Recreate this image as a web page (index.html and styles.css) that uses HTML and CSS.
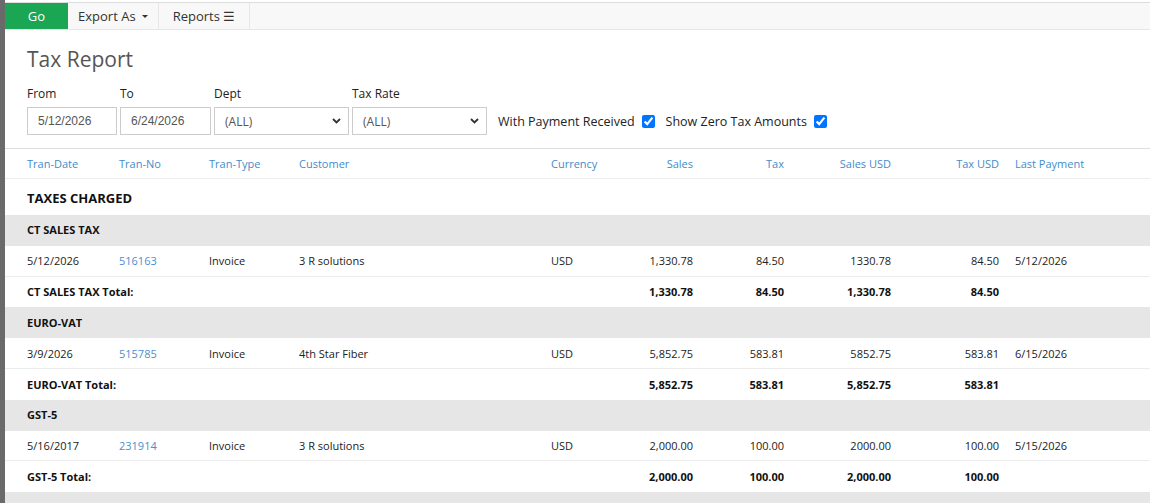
FILE: index.html
```html
<!DOCTYPE html>
<html>
<head>
<meta charset="utf-8">
<link rel="stylesheet" href="styles.css">
</head>
<body>
<div class="app">
  <div class="rail"></div>
  <div class="main">
    <div class="toolbar">
      <button class="tb-go">Go</button>
      <button class="tb-item">Export As <span class="caret"></span></button>
      <button class="tb-item">Reports ☰</button>
    </div>

    <div class="filters">
      <h1 class="title">Tax Report</h1>
      <div class="filter-row">
        <div class="field">
          <label class="flabel">From</label>
          <input class="date" type="text" value="5/12/2026">
        </div>
        <div class="field">
          <label class="flabel">To</label>
          <input class="date wide" type="text" value="6/24/2026">
        </div>
        <div class="field">
          <label class="flabel">Dept</label>
          <select class="sel"><option>(ALL)</option></select>
        </div>
        <div class="field">
          <label class="flabel">Tax Rate</label>
          <select class="sel"><option>(ALL)</option></select>
        </div>
        <label class="check first">With Payment Received <input type="checkbox" checked></label>
        <label class="check">Show Zero Tax Amounts <input type="checkbox" checked></label>
      </div>
    </div>

    <div class="report">
      <div class="row head">
        <div class="c">Tran-Date</div><div class="c">Tran-No</div><div class="c">Tran-Type</div><div class="c">Customer</div><div class="c">Currency</div>
        <div class="c r">Sales</div><div class="c r">Tax</div><div class="c r">Sales USD</div><div class="c r">Tax USD</div><div class="c">Last Payment</div>
      </div>
      <div class="row section"><div class="c span">TAXES CHARGED</div></div>

      <div class="row group"><div class="c span">CT SALES TAX</div></div>
      <div class="row data">
        <div class="c">5/12/2026</div><div class="c"><a class="link">516163</a></div><div class="c">Invoice</div><div class="c">3 R solutions</div><div class="c">USD</div>
        <div class="c r">1,330.78</div><div class="c r">84.50</div><div class="c r">1330.78</div><div class="c r">84.50</div><div class="c">5/12/2026</div>
      </div>
      <div class="row total">
        <div class="c span4">CT SALES TAX Total:</div><div class="c"></div>
        <div class="c r">1,330.78</div><div class="c r">84.50</div><div class="c r">1,330.78</div><div class="c r">84.50</div><div class="c"></div>
      </div>

      <div class="row group"><div class="c span">EURO-VAT</div></div>
      <div class="row data">
        <div class="c">3/9/2026</div><div class="c"><a class="link">515785</a></div><div class="c">Invoice</div><div class="c">4th Star Fiber</div><div class="c">USD</div>
        <div class="c r">5,852.75</div><div class="c r">583.81</div><div class="c r">5852.75</div><div class="c r">583.81</div><div class="c">6/15/2026</div>
      </div>
      <div class="row total">
        <div class="c span4">EURO-VAT Total:</div><div class="c"></div>
        <div class="c r">5,852.75</div><div class="c r">583.81</div><div class="c r">5,852.75</div><div class="c r">583.81</div><div class="c"></div>
      </div>

      <div class="row group"><div class="c span">GST-5</div></div>
      <div class="row data">
        <div class="c">5/16/2017</div><div class="c"><a class="link">231914</a></div><div class="c">Invoice</div><div class="c">3 R solutions</div><div class="c">USD</div>
        <div class="c r">2,000.00</div><div class="c r">100.00</div><div class="c r">2000.00</div><div class="c r">100.00</div><div class="c">5/15/2026</div>
      </div>
      <div class="row total">
        <div class="c span4">GST-5 Total:</div><div class="c"></div>
        <div class="c r">2,000.00</div><div class="c r">100.00</div><div class="c r">2,000.00</div><div class="c r">100.00</div><div class="c"></div>
      </div>

      <div class="row group"><div class="c span">&nbsp;</div></div>
    </div>
  </div>
</div>
</body>
</html>
```

FILE: styles.css
```css
* { box-sizing: border-box; }
html, body { margin: 0; padding: 0; background: #fff; }
body {
  font-family: "Open Sans", "Liberation Sans", sans-serif;
  color: #333;
  overflow: hidden;
}
.app { display: flex; min-height: 503px; }
.rail { width: 5px; background: #6a6a6a; flex: none; }
.main { flex: 1; padding-top: 2px; min-width: 0; }

.toolbar {
  display: flex;
  height: 28px;
  background: #f8f8f8;
  border-top: 1px solid #dcdcdc;
  border-bottom: 1px solid #e6e6e6;
}
.toolbar button {
  font-family: "Open Sans", sans-serif;
  font-size: 13px;
  border: 0;
  margin: 0;
  height: 26px;
  padding: 0;
  background: transparent;
  color: #333;
}
.tb-go { width: 63px; background: #1aa652 !important; color: #fff !important; }
.tb-item { width: 91px; border-right: 1px solid #e6e6e6 !important; }
.caret {
  display: inline-block;
  width: 0; height: 0;
  border-left: 3px solid transparent;
  border-right: 3px solid transparent;
  border-top: 3px solid #333;
  vertical-align: middle;
  margin-left: 3px;
  margin-bottom: 2px;
}

.filters {
  padding: 0 0 13px 22px;
  border-bottom: 1px solid #dedede;
}
.title {
  margin: 0;
  padding-top: 14px;
  font-size: 21px;
  line-height: 30px;
  font-weight: 400;
  color: #555;
}
.filter-row { display: flex; align-items: flex-end; gap: 3px; margin-top: 11px; }
.field { display: flex; flex-direction: column; }
.flabel { font-size: 12px; line-height: 18px; color: #222; margin-bottom: 4px; }
.date {
  width: 90px; height: 28px;
  border: 1px solid #ccc;
  padding: 0 0 0 10px;
  font-family: "Liberation Sans", Arial, sans-serif;
  font-size: 12px;
  color: #555;
  outline: none;
}
.date.wide { width: 91px; }
.sel {
  -webkit-appearance: none; appearance: none;
  width: 135px; height: 28px;
  border: 1px solid #ccc;
  border-radius: 0;
  padding: 0 0 0 10px;
  font-family: "Open Sans", sans-serif;
  font-size: 12px;
  color: #555;
  background: #fff url("data:image/svg+xml,%3Csvg xmlns='http://www.w3.org/2000/svg' width='9' height='6' viewBox='0 0 9 6'%3E%3Cpath d='M1 1l3.5 3.5L8 1' fill='none' stroke='%23333' stroke-width='1.8'/%3E%3C/svg%3E") no-repeat right 7px center;
}
.check {
  display: flex; align-items: center;
  height: 28px;
  font-size: 12.5px;
  color: #222;
}
.check.first { margin-left: 8px; }
.check input { margin: 0 0 0 7px; width: 13px; height: 13px; }
.check + .check { margin-left: 8px; }

.report { font-size: 11px; color: #222; }
.row {
  display: grid;
  grid-template-columns: 92px 90px 90px 252px 78px 80px 91px 107px 108px 1fr;
  padding-left: 14px;
  align-items: center;
  height: 30.8px;
  border-bottom: 1px solid #ececec;
}
.c { padding: 0 8px; white-space: nowrap; }
.r { text-align: right; }
.span { grid-column: 1 / -1; }
.span4 { grid-column: 1 / 5; }
.row.head { height: 30px; color: #3f8ccc; border-bottom-color: #ececec; }
.row.section { height: 36px; font-size: 13px; font-weight: 700; color: #111; border-bottom: 0; padding-top: 2px; }
.row.group { background: #e6e6e6; font-weight: 700; color: #111; border-bottom-color: #e6e6e6; }
.row.total { font-weight: 700; color: #111; border-bottom: 0; }
.link { color: #4a8fcf; text-decoration: none; }
```
